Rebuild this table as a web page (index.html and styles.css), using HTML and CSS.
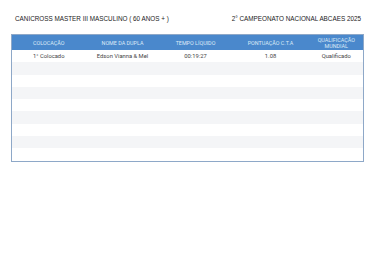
FILE: index.html
```html
<!DOCTYPE html>
<html lang="pt">
<head>
<meta charset="utf-8">
<link rel="stylesheet" href="styles.css">
</head>
<body>
<div class="page">
  <div class="titles">
    <div class="title">CANICROSS MASTER III MASCULINO ( 60 ANOS + )</div>
    <div class="title">2° CAMPEONATO NACIONAL ABCAES 2025</div>
  </div>
  <table class="results">
    <colgroup>
      <col class="c1"><col class="c2"><col class="c3"><col class="c4"><col class="c5">
    </colgroup>
    <thead>
      <tr>
        <th>COLOCAÇÃO</th>
        <th>NOME DA DUPLA</th>
        <th>TEMPO LÍQUIDO</th>
        <th>PONTUAÇÃO C.T.A</th>
        <th>QUALIFICAÇÃO MUNDIAL</th>
      </tr>
    </thead>
    <tbody>
      <tr><td>1° Colocado</td><td>Edson Vianna &amp; Mel</td><td>00:19:27</td><td>1.08</td><td>Qualificado</td></tr>
      <tr><td></td><td></td><td></td><td></td><td></td></tr>
      <tr><td></td><td></td><td></td><td></td><td></td></tr>
      <tr><td></td><td></td><td></td><td></td><td></td></tr>
      <tr><td></td><td></td><td></td><td></td><td></td></tr>
      <tr><td></td><td></td><td></td><td></td><td></td></tr>
      <tr><td></td><td></td><td></td><td></td><td></td></tr>
      <tr><td></td><td></td><td></td><td></td><td></td></tr>
      <tr><td></td><td></td><td></td><td></td><td></td></tr>
    </tbody>
  </table>
</div>
</body>
</html>
```
FILE: styles.css
```css
html, body {
  margin: 0;
  padding: 0;
  background: #ffffff;
}
.page {
  padding: 13px 12px 0 11px;
  font-family: Roboto, "Liberation Sans", sans-serif;
}
.titles {
  display: flex;
  justify-content: space-between;
  padding: 0 2px 0 4px;
  height: 10px;
  align-items: center;
}
.title {
  font-family: "Liberation Sans", Arial, sans-serif;
  font-size: 6.35px;
  color: #222222;
}
.results {
  margin-top: 11px;
  width: 100%;
  table-layout: fixed;
  border-collapse: collapse;
  border: 1px solid #8ea8c8;
}
.c1 { width: 74px; }
.c2 { width: 74px; }
.c3 { width: 72px; }
.c4 { width: 78px; }
.c5 { width: 54px; }
.results th {
  background: #4a88cc;
  color: #dce9f7;
  font-weight: normal;
  font-size: 5.4px;
  height: 15px;
  padding: 0 4px;
  text-align: center;
  line-height: 6px;
}
.results td {
  height: 12.3px;
  padding: 0;
  font-size: 5.8px;
  color: #444444;
  text-align: center;
}
.results tbody tr:nth-child(even) td {
  background: #f4f5f7;
}
```
